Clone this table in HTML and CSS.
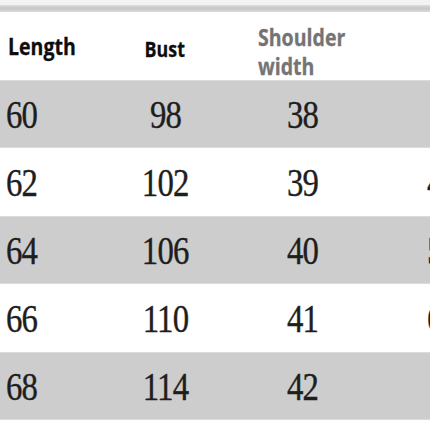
FILE: index.html
```html
<!DOCTYPE html>
<html lang="en">
<head>
<meta charset="utf-8">
<title>Size chart</title>
<link rel="stylesheet" href="styles.css">
</head>
<body>
<div class="sheet">
  <div class="topgap"></div>
  <div class="topbar"></div>
  <div class="table">
    <div class="row head">
      <div class="cell c1"><span class="hd hd-len">Length</span></div>
      <div class="cell c2"><span class="hd hd-bust">Bust</span></div>
      <div class="cell c3"><span class="hd hd-sh">Shoulder<br>width</span></div>
      <div class="cell c4"></div>
    </div>
    <div class="row gray">
      <div class="cell c1"><span class="num">60</span></div>
      <div class="cell c2"><span class="num">98</span></div>
      <div class="cell c3"><span class="num">38</span></div>
      <div class="cell c4"><span class="num"></span></div>
    </div>
    <div class="row white">
      <div class="cell c1"><span class="num">62</span></div>
      <div class="cell c2"><span class="num">102</span></div>
      <div class="cell c3"><span class="num">39</span></div>
      <div class="cell c4"><span class="num">46</span></div>
    </div>
    <div class="row gray">
      <div class="cell c1"><span class="num">64</span></div>
      <div class="cell c2"><span class="num">106</span></div>
      <div class="cell c3"><span class="num">40</span></div>
      <div class="cell c4"><span class="num">53</span></div>
    </div>
    <div class="row white">
      <div class="cell c1"><span class="num">66</span></div>
      <div class="cell c2"><span class="num">110</span></div>
      <div class="cell c3"><span class="num">41</span></div>
      <div class="cell c4"><span class="num">60</span></div>
    </div>
    <div class="row gray">
      <div class="cell c1"><span class="num">68</span></div>
      <div class="cell c2"><span class="num">114</span></div>
      <div class="cell c3"><span class="num">42</span></div>
      <div class="cell c4"><span class="num"></span></div>
    </div>
  </div>
</div>
</body>
</html>
```

FILE: styles.css
```css
html, body {
  margin: 0;
  padding: 0;
  background: #ffffff;
}
body {
  width: 430px;
  height: 430px;
  overflow: hidden;
}
.sheet {
  width: 500px;
}
.topgap {
  height: 5px;
  background: #f3f3f3;
}
.topbar {
  height: 7px;
  background: linear-gradient(#dedede, #c9c9c9 40%, #c9c9c9 60%, #dcdcdc);
}
.table {
  display: flex;
  flex-direction: column;
}
.row {
  display: grid;
  grid-template-columns: 110px 110px 164px 116px;
  height: 68px;
  align-items: center;
  box-sizing: border-box;
}
.row.head {
  background: #ffffff;
  align-items: start;
}
.row.gray {
  background: #cdcdcd;
  border-top: 1px solid #dcdcdc;
  border-bottom: 1px solid #dcdcdc;
}
.row.white {
  background: #ffffff;
}
.cell {
  white-space: nowrap;
}
.c1 {
  padding-left: 6px;
  text-align: left;
}
.c2, .c3, .c4 {
  text-align: center;
}
.hd {
  display: inline-block;
  font-family: "Open Sans", "Liberation Sans", sans-serif;
  font-weight: 700;
  font-size: 23px;
  line-height: 29px;
  color: #0d0d0d;
  transform: scaleX(0.85);
  -webkit-text-stroke: 0.3px currentColor;
}
.hd-len {
  padding-top: 20px;
  transform-origin: left top;
  margin-left: 2px;
}
.hd-bust {
  padding-top: 23px;
  font-size: 21px;
  transform-origin: center top;
}
.hd-sh {
  padding-top: 11px;
  color: #747474;
  text-align: left;
  transform-origin: left top;
  margin-left: 38px;
  display: block;
}
.num {
  display: inline-block;
  font-family: "Liberation Serif", "Times New Roman", serif;
  font-size: 41px;
  line-height: 41px;
  color: #1e1e1e;
  transform: scaleX(0.8);
  letter-spacing: -1px;
  -webkit-text-stroke: 0.4px currentColor;
}
.c1 .num {
  transform-origin: left center;
}
.c2 .num, .c3 .num, .c4 .num {
  transform-origin: center center;
}
```
